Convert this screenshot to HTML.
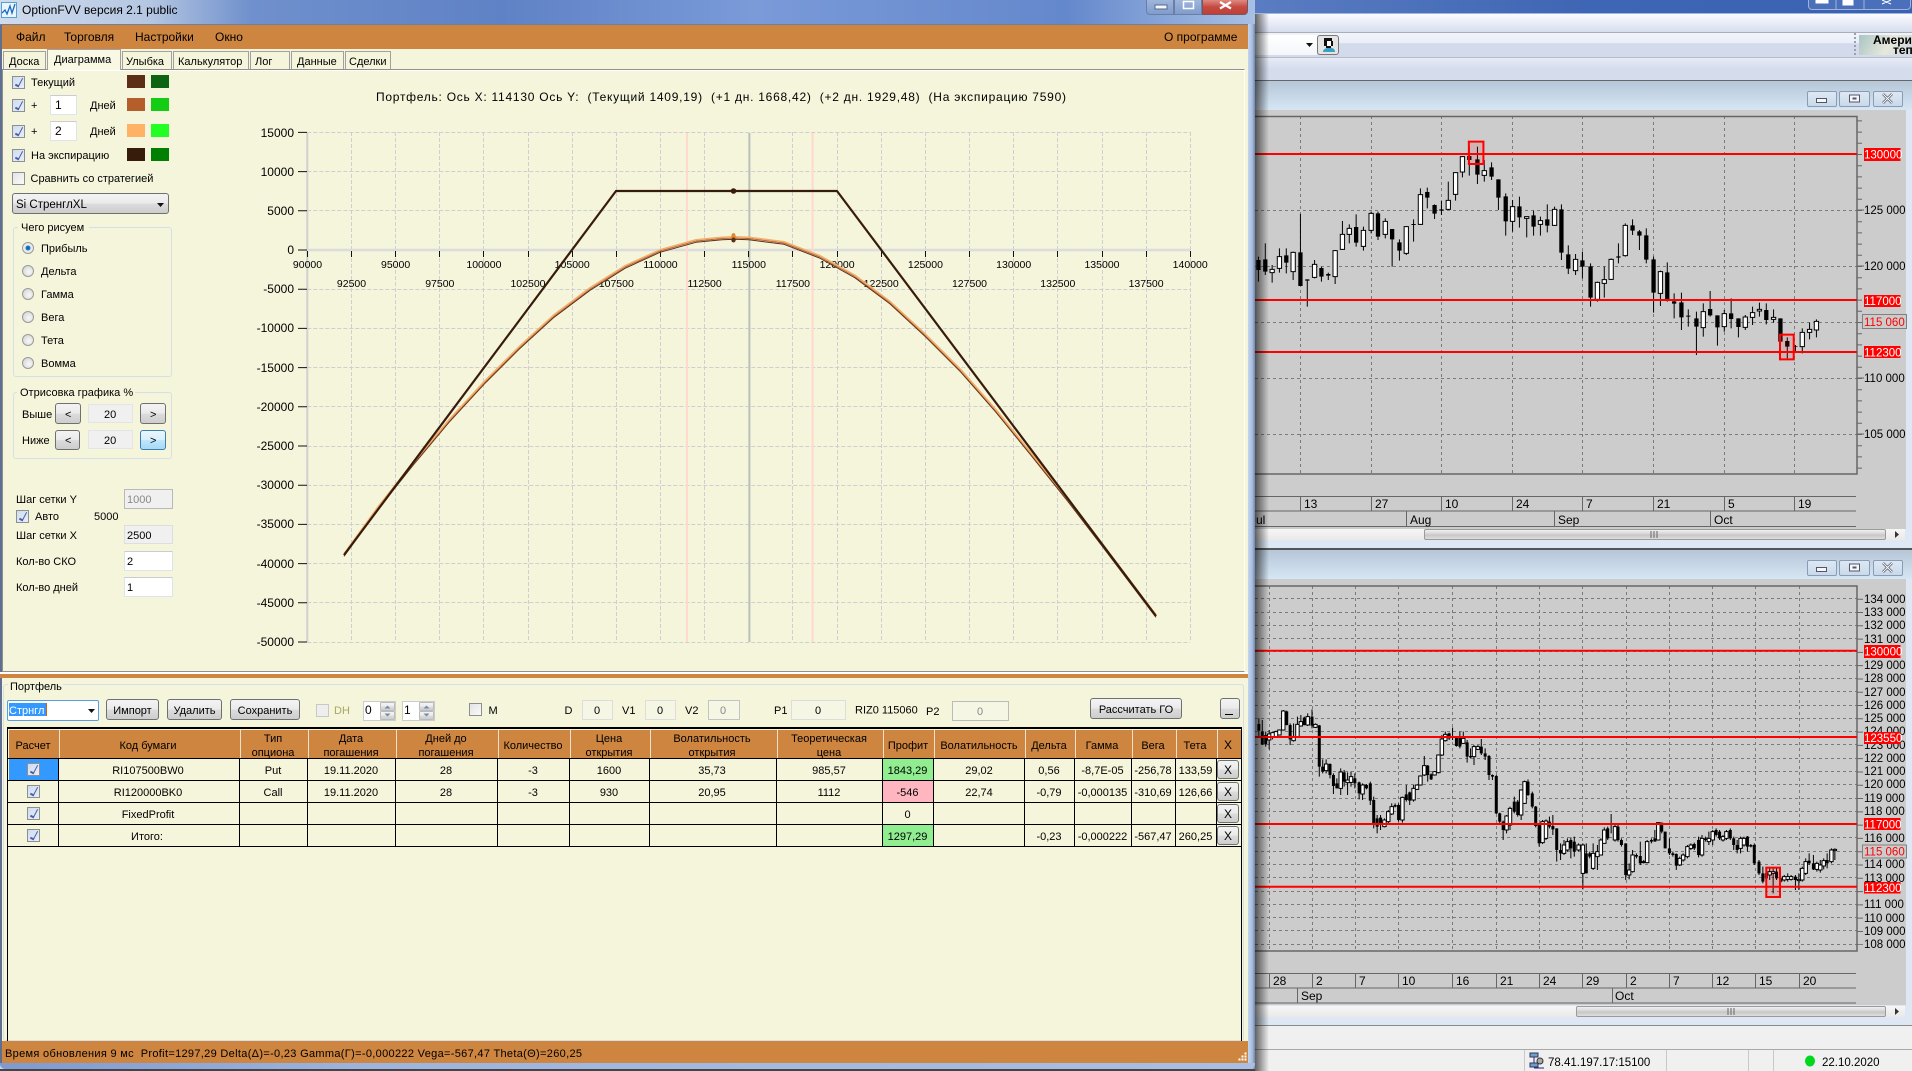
<!DOCTYPE html>
<html><head><meta charset="utf-8"><title>OptionFVV</title>
<style>
html,body{margin:0;padding:0;width:1912px;height:1071px;overflow:hidden;background:#f0f0f0}
div{position:absolute;box-sizing:border-box}
svg{position:absolute;left:0;top:0}
text{font-family:"Liberation Sans","Noto Sans CJK SC",sans-serif;font-size:11px;fill:#000;white-space:pre}
.c{width:13px;height:13px;border:1px solid #8e8f8f;background:linear-gradient(135deg,#e4e4e4,#fafafa)}
.c.on{background:linear-gradient(135deg,#cfdcf0,#e8eef8)}
.c.on:after{content:"";position:absolute;left:3.500px;top:0;width:3px;height:8px;border:solid #4a5fa8;border-width:0 1.500px 2px 0;transform:rotate(28deg)}
.r{width:12px;height:12px;border-radius:50%;left:22px;border:1px solid #9a9a9a;background:radial-gradient(circle at 60% 60%,#f8f8f8,#cfcfcf)}
.r.on{background:radial-gradient(circle,#0a5fa8 0,#1b7fc8 30%,#e8e8e8 40%,#f4f4f4)}
.b{border:1px solid #707070;border-radius:3px;background:linear-gradient(#f3f3f3,#ebebeb 48%,#dcdcdc 52%,#cdcdcd)}
.i{border:1px solid #dfe4ea;border-top-color:#c9ccd2;background:#fff}
.g{border:1px solid #b9b9b9;background:#f0f0f0}
.p{border:1px solid #d6dfe6;border-radius:3px}
.w{border:1px solid #8a9bb5;border-radius:2px;background:linear-gradient(#dde8f4,#c9d9ea)}
.s{background:linear-gradient(#f6f6f6,#e9e9e9)}
.t{border:1px solid #9a9a9a;border-radius:2px;background:linear-gradient(#f0f0f0,#d4d4d4 45%,#c6c6c6 55%,#dedede)}
.h{background:linear-gradient(#b5c6d8,#d6e6f4)}
</style></head><body>

<!-- right side background -->
<div style="left:1255px;top:0;width:657px;height:14px;background:linear-gradient(90deg,#5a7cc2,#3f66b4 50%,#3a62b0);border-bottom:1px solid #9db7e0"></div>
<div style="left:1255px;top:14px;width:657px;height:18px;background:linear-gradient(#fbfcfe,#eef1f9 35%,#d6ddee)"></div>
<div style="left:1255px;top:32px;width:657px;height:26px;border-top:1px solid #a9aeb8;border-bottom:1px solid #b8bcc4;background:linear-gradient(#f0f3fa,#ebeff8 40%,#d3daec 45%,#d3daec)"></div>
<div style="left:1255px;top:35px;width:62px;height:20px;background:linear-gradient(#fff,#f4f6fa)"></div>
<div style="left:1317px;top:35px;width:22px;height:20px;border:1px solid #777;border-radius:3px;background:#e5e5e5"></div>
<div style="left:1851px;top:33px;width:8px;height:24px;background:repeating-linear-gradient(#9aa0ae 0 2px,transparent 2px 4px) 3px 0/2px 24px no-repeat"></div>
<div style="left:1859px;top:35px;width:53px;height:20px;background:linear-gradient(120deg,#a9c4c4,#e8e8dc 55%,#c8d6dc)"></div>
<div style="left:1255px;top:58px;width:657px;height:22px;background:linear-gradient(#e6ebf6,#d5dded 50%)"></div>
<div style="left:1255px;top:80px;width:657px;height:469px;background:#dde8f4;border-top:1px solid #666"></div>
<div class="h" style="left:1255px;top:81px;width:657px;height:29px"></div>
<div style="left:1255px;top:110px;width:651px;height:419px;background:#ccc"></div>
<div class="s" style="left:1255px;top:529px;width:650px;height:11px"></div>
<div class="t" style="left:1424px;top:529px;width:462px;height:11px"></div>
<div style="left:1255px;top:548px;width:657px;height:2px;background:#555"></div>
<div class="h" style="left:1255px;top:550px;width:657px;height:29px"></div>
<div style="left:1255px;top:579px;width:657px;height:446px;background:#dde8f4"></div>
<div style="left:1255px;top:579px;width:651px;height:426px;background:#ccc"></div>
<div class="s" style="left:1255px;top:1006px;width:650px;height:11px"></div>
<div class="t" style="left:1576px;top:1006px;width:310px;height:11px"></div>
<div style="left:1255px;top:1025px;width:657px;height:1px;background:#8a8a8a"></div>
<div style="left:1255px;top:1049px;width:657px;height:1px;background:#a8a8a8"></div>
<div style="left:1524px;top:1050px;width:1px;height:21px;background:#c8c8c8"></div>
<div style="left:1666px;top:1050px;width:1px;height:21px;background:#c8c8c8"></div>
<div style="left:1748px;top:1050px;width:1px;height:21px;background:#c8c8c8"></div>
<div style="left:1773px;top:1050px;width:1px;height:21px;background:#c8c8c8"></div>
<div class="w" style="left:1807px;top:91px;width:30px;height:16px"></div>
<div class="w" style="left:1839px;top:91px;width:31px;height:16px"></div>
<div class="w" style="left:1873px;top:91px;width:30px;height:16px"></div>
<div class="w" style="left:1807px;top:560px;width:30px;height:16px"></div>
<div class="w" style="left:1839px;top:560px;width:31px;height:16px"></div>
<div class="w" style="left:1873px;top:560px;width:30px;height:16px"></div>
<div style="left:1808px;top:-2px;width:103px;height:12px;border:1px solid #9fb4d8;border-radius:0 0 4px 4px;background:#4a70bc"></div>

<!-- main window -->
<div style="left:0;top:0;width:1255px;height:1070px;background:linear-gradient(90deg,#c6d5ec,#a7bde0)"></div>
<div style="left:0;top:0;width:1255px;height:24px;background:linear-gradient(90deg,#d0dcec 0,#b4c6e2 12%,#6f90cc 20%,#5f82c6 40%,#7a9ad8 60%,#6488cc 85%,#a8c0e4 100%)"></div>
<div style="left:1248px;top:24px;width:7px;height:1046px;background:linear-gradient(90deg,#c6d5ec,#a7bde0 60%,#6f87b0)"></div>
<div style="left:0;top:24px;width:1248px;height:1px;background:#6e7f9b"></div>
<div style="left:0;top:25px;width:1248px;height:24px;background:#cd853f"></div>
<div style="left:0;top:49px;width:1248px;height:992px;background:#f5f5dc"></div>
<div style="left:0;top:25px;width:2px;height:1040px;background:#5e6f8f"></div>
<div style="left:2px;top:69px;width:1243px;height:603px;border:1px solid #8f8f8f;border-right-color:#fff;border-bottom-color:#8f8f8f;background:#f5f5dc"></div>
<div style="left:3px;top:70px;width:1241px;height:1px;background:#fff"></div>
<div style="left:0;top:672px;width:1248px;height:2px;background:#fff"></div>
<div style="left:0;top:674px;width:1248px;height:4px;background:#cd853f"></div>

<!-- tabs -->
<div style="left:3px;top:51px;width:43px;height:18px;border:1px solid #a0a0a0;border-bottom:0"></div>
<div style="left:47px;top:49px;width:74px;height:21px;border:1px solid #a0a0a0;border-bottom:0;background:#f8f8e4"></div>
<div style="left:122px;top:51px;width:50px;height:18px;border:1px solid #a0a0a0;border-bottom:0"></div>
<div style="left:173px;top:51px;width:76px;height:18px;border:1px solid #a0a0a0;border-bottom:0"></div>
<div style="left:250px;top:51px;width:40px;height:18px;border:1px solid #a0a0a0;border-bottom:0"></div>
<div style="left:291px;top:51px;width:53px;height:18px;border:1px solid #a0a0a0;border-bottom:0"></div>
<div style="left:345px;top:51px;width:46px;height:18px;border:1px solid #a0a0a0;border-bottom:0"></div>

<!-- left panel widgets -->
<div class="c on" style="left:12px;top:76px"></div>
<div class="c on" style="left:12px;top:99px"></div>
<div class="c on" style="left:12px;top:125px"></div>
<div class="c on" style="left:12px;top:149px"></div>
<div class="c" style="left:12px;top:172px"></div>
<div class="i" style="left:50px;top:95px;width:27px;height:20px"></div>
<div class="i" style="left:50px;top:121px;width:27px;height:20px"></div>
<div style="left:127px;top:75px;width:18px;height:13px;background:#5c2e16"></div><div style="left:151px;top:75px;width:18px;height:13px;background:#0d6412"></div>
<div style="left:127px;top:98px;width:18px;height:13px;background:#b35e2b"></div><div style="left:151px;top:98px;width:18px;height:13px;background:#14cc14"></div>
<div style="left:127px;top:124px;width:18px;height:13px;background:#ffb266"></div><div style="left:151px;top:124px;width:18px;height:13px;background:#22ff22"></div>
<div style="left:127px;top:148px;width:18px;height:13px;background:#381c0b"></div><div style="left:151px;top:148px;width:18px;height:13px;background:#008000"></div>
<div class="b" style="left:12px;top:193px;width:157px;height:21px"></div>
<div class="p" style="left:13px;top:227px;width:159px;height:150px"></div>
<div style="left:18px;top:221px;width:71px;height:12px;background:#f5f5dc"></div>
<div class="r on" style="top:242px"></div><div class="r" style="top:265px"></div><div class="r" style="top:288px"></div><div class="r" style="top:311px"></div><div class="r" style="top:334px"></div><div class="r" style="top:357px"></div>
<div class="p" style="left:13px;top:392px;width:159px;height:67px"></div>
<div style="left:17px;top:386px;width:118px;height:12px;background:#f5f5dc"></div>
<div class="b" style="left:55px;top:403px;width:26px;height:21px"></div>
<div class="g" style="left:88px;top:404px;width:45px;height:19px;border-color:#e4e4e4"></div>
<div class="b" style="left:140px;top:403px;width:26px;height:21px"></div>
<div class="b" style="left:55px;top:430px;width:25px;height:20px"></div>
<div class="g" style="left:88px;top:430px;width:45px;height:19px;border-color:#e4e4e4"></div>
<div class="b" style="left:140px;top:430px;width:26px;height:20px;border-color:#3c7fb1;background:linear-gradient(#eaf6fd,#d9f0fc 48%,#bee6fd 52%,#a7d9f5)"></div>
<div class="g" style="left:124px;top:489px;width:49px;height:20px"></div>
<div class="c on" style="left:16px;top:510px"></div>
<div class="g" style="left:124px;top:525px;width:49px;height:19px;border-color:#dedede"></div>
<div class="i" style="left:124px;top:551px;width:49px;height:20px"></div>
<div class="i" style="left:124px;top:577px;width:49px;height:20px"></div>

<!-- portfolio toolbar -->
<div class="p" style="left:3px;top:684px;width:1241px;height:357px"></div>
<div style="left:8px;top:679px;width:55px;height:12px;background:#f5f5dc"></div>
<div style="left:7px;top:700px;width:92px;height:21px;background:#fff;border:1px solid #569de5;border-radius:2px"></div>
<div style="left:9px;top:703px;width:37px;height:13px;background:#3399ff"></div>
<div style="left:46px;top:703px;width:1px;height:13px;background:#d06010"></div>
<div class="b" style="left:106px;top:699px;width:53px;height:21px"></div>
<div class="b" style="left:167px;top:699px;width:55px;height:21px"></div>
<div class="b" style="left:230px;top:699px;width:70px;height:21px"></div>
<div class="c" style="left:316px;top:704px;border-color:#c8c8c8;background:#eee"></div>
<div class="g" style="left:363px;top:701px;width:33px;height:20px;background:#fff;border-color:#ccc"></div>
<div class="b" style="left:380px;top:702px;width:15px;height:9px;border-radius:1px;border-color:#bbb"></div>
<div class="b" style="left:380px;top:711px;width:15px;height:9px;border-radius:1px;border-color:#bbb"></div>
<div class="g" style="left:402px;top:701px;width:33px;height:20px;background:#fff;border-color:#ccc"></div>
<div class="b" style="left:419px;top:702px;width:15px;height:9px;border-radius:1px;border-color:#bbb"></div>
<div class="b" style="left:419px;top:711px;width:15px;height:9px;border-radius:1px;border-color:#bbb"></div>
<div class="c" style="left:469px;top:703px"></div>
<div class="g" style="left:582px;top:700px;width:31px;height:20px;background:#f6f6e4;border-color:#ddd"></div>
<div class="g" style="left:645px;top:700px;width:31px;height:20px;background:#f6f6e4;border-color:#ddd"></div>
<div class="g" style="left:708px;top:700px;width:32px;height:20px;background:#f6f6e4;border-color:#c4c4c4"></div>
<div class="g" style="left:791px;top:700px;width:55px;height:20px;background:#f6f6e4;border-color:#ddd"></div>
<div class="g" style="left:952px;top:701px;width:57px;height:20px;background:#f6f6e4;border-color:#bbb"></div>
<div class="b" style="left:1090px;top:698px;width:92px;height:21px"></div>
<div class="b" style="left:1220px;top:698px;width:20px;height:21px"></div>

<!-- table -->
<div style="left:7px;top:727px;width:1235px;height:315px;border:1px solid #000;border-bottom:0;border-width:2px 1px 0 1px"></div>
<div style="left:9px;top:730px;width:1232px;height:28px;background:#cd853f"></div>
<div style="left:9px;top:759px;width:49px;height:21px;background:#3399ff"></div>
<div style="left:882px;top:759px;width:51px;height:21px;background:#90ee90"></div>
<div style="left:882px;top:781px;width:51px;height:21px;background:#ffb6c1"></div>
<div style="left:882px;top:825px;width:51px;height:21px;background:#90ee90"></div>
<div class="c on" style="left:27px;top:763px"></div>
<div class="c on" style="left:27px;top:785px"></div>
<div class="c on" style="left:27px;top:807px"></div>
<div class="c on" style="left:27px;top:829px"></div>
<div class="b" style="left:1217px;top:760px;width:22px;height:19px"></div>
<div class="b" style="left:1217px;top:782px;width:22px;height:19px"></div>
<div class="b" style="left:1217px;top:804px;width:22px;height:19px"></div>
<div class="b" style="left:1217px;top:826px;width:22px;height:19px"></div>

<!-- status -->
<div style="left:0;top:1041px;width:1248px;height:22px;background:#cd853f;border-left:2px solid #5e6f8f"></div>
<div style="left:0;top:1063px;width:1255px;height:6px;background:linear-gradient(90deg,#7e9ad0,#9db5de 30%,#a8bee2);border-radius:0 0 5px 5px"></div>
<div style="left:0;top:1069px;width:1255px;height:2px;background:#444"></div>

<!-- window controls -->
<div style="left:1146px;top:-1px;width:28px;height:16px;border:1px solid #6a7ea8;border-radius:0 0 0 4px;background:linear-gradient(#9fb6dc,#7f9ccc)"></div>
<div style="left:1174px;top:-1px;width:28px;height:16px;border:1px solid #6a7ea8;background:linear-gradient(#9fb6dc,#7f9ccc)"></div>
<div style="left:1202px;top:-1px;width:46px;height:16px;border:1px solid #7a5560;border-radius:0 0 4px 0;background:linear-gradient(#e08a80,#c44a42 50%,#c04038)"></div>

<svg width="1912" height="1071" viewBox="0 0 1912 1071">
<defs>
<linearGradient id="sh"><stop offset="0" stop-color="#000" stop-opacity=".6"/><stop offset="1" stop-color="#000" stop-opacity="0"/></linearGradient>
<clipPath id="rc"><rect x="1255" y="0" width="657" height="1071"/></clipPath>
</defs>

<g clip-path="url(#rc)">
<!-- right titlebar glyphs -->
<path d="M1816 0h12v3h-12zM1843 0h10v5h-10zM1882 0l9 4M1891 0l-9 4" fill="#fff" stroke="#fff"/>
<path d="M1836 0v10M1864 0v10" stroke="#9fb4d8"/>
<!-- toolbar icon -->
<path d="M1324 38h8v3h1v5h-2v2h-5v-2h-2z" fill="#111"/><path d="M1327 41h4v5h-4z" fill="#fff"/><path d="M1323 52c0-3 3-4 5-4h3c2 0 4 1 4 4z" fill="#3aa0c8"/>
<path d="M1306 43h7l-3.500 4z" fill="#111"/>
<text x="1873" y="44" style="font-size:12px;font-weight:bold">Амери</text>
<text x="1893" y="54" style="font-size:12px;font-weight:bold">теп</text>

<!-- chart 1 window buttons -->
<path d="M1816.500 98.500h10v4h-10zM1849.500 95h10v7h-10z" fill="#f4f8fc" stroke="#556"/><path d="M1852.500 97.500h4v2h-4z" fill="#556"/>
<path d="M1883 94l9 9M1892 94l-9 9" stroke="#556" stroke-width="2.500"/><path d="M1883 94l9 9M1892 94l-9 9" stroke="#fff"/>
<path d="M1816.500 567.500h10v4h-10zM1849.500 564h10v7h-10z" fill="#f4f8fc" stroke="#556"/><path d="M1852.500 566.500h4v2h-4z" fill="#556"/>
<path d="M1883 563l9 9M1892 563l-9 9" stroke="#556" stroke-width="2.500"/><path d="M1883 563l9 9M1892 563l-9 9" stroke="#fff"/>

<!-- chart 1 grid -->
<g fill="none" stroke="#7a7a7a" stroke-dasharray="3 3">
<path d="M1255 210.500H1857M1255 266.500H1857M1255 322.500H1857M1255 378.500H1857M1255 434.500H1857"/>
<path d="M1300.500 116V474M1371.500 116V474M1441.500 116V474M1512.500 116V474M1582.500 116V474M1653.500 116V474M1724.500 116V474M1794.500 116V474"/>
</g>
<path d="M1255 116.500H1857V474H1255" fill="none" stroke="#666" stroke-width="1.500"/>
<path d="M1859.500 120.400V471" stroke="#666" stroke-width="5" stroke-dasharray="1 10.200" fill="none"/>
<path d="M1857 210h7M1857 266h7M1857 378h7M1857 434h7" stroke="#666"/>

<g transform="translate(1240 0) scale(.42857 .33333)" fill="none">
<path vector-effect="non-scaling-stroke" stroke="#000" stroke-width="1" d="M43 770V845M59 730V825M75 795V848M92 745V818M108 745V820M124 755V840M141 642V858M157 838V920M174 780V835M190 800V845M206 818V840M222 750V852M239 663V750M255 673V730M271 643V740M288 680V752M306 635V700M322 635V720M339 655V715M355 687V800M372 718V782M388 678V765M405 658V725M421 565V675M437 563V625M454 613V657M470 603V645M486 545V630M503 517V602M519 468V532M535 440V527M554 440V552M570 480V545M587 487V540M603 538V630M620 580V707M636 600V695M652 590V683M669 650V712M685 632V707M701 650V707M717 613V697M734 620V678M750 613V780M766 736V822M783 762V825M799 755V835M818 790V920M834 845V905M850 800V893M866 775V840M883 730V790M899 670V770M916 658V705M932 690V750M948 685V790M965 770V938M981 812V918M997 787V905M1013 880V955M1030 878V990M1046 928V980M1065 935V1065M1081 910V1010M1097 873V950M1114 946V1037M1130 930V995M1146 895V985M1163 955V1012M1179 945V990M1196 920V975M1212 908V950M1228 910V973M1245 928V968M1261 955V1025M1277 1012V1075M1296 1035V1055M1312 985V1060M1329 968V1018M1345 958V1012"/>
<path stroke="#000" stroke-width="10" d="M43 780V810M59 778V815M108 766V788M141 757V858M157 838V842M190 804V830M206 822V827M271 681V728M322 640V710M355 687V718M372 727V752M405 672V675M437 576V593M454 615V641M470 628V632M535 468V480M554 478V524M587 502V530M603 538V593M620 589V664M652 619V652M685 646V680M717 658V677M750 628V758M766 763V806M799 781V800M818 799V893M883 769V773M916 676V692M932 694V707M948 706V779M965 778V878M997 817V903M1013 904V911M1030 907V952M1046 947V950M1065 955V980M1097 927V946M1114 946V982M1146 940V957M1163 955V981M1228 930V960M1261 955V1025M1277 1023V1040M1296 1038V1040"/>
<path vector-effect="non-scaling-stroke" fill="#fff" stroke="#000" stroke-width="1" d="M70 808h10v10h-10zM87 770h10v35h-10zM119 757h10v58h-10zM169 793h10v39h-10zM217 752h10v78h-10zM234 703h10v45h-10zM250 685h10v18h-10zM283 691h10v48h-10zM301 640h10v51h-10zM334 664h10v39h-10zM383 680h10v80h-10zM416 584h10v89h-10zM481 601h10v27h-10zM498 518h10v65h-10zM514 470h10v46h-10zM565 512h10v14h-10zM631 620h10v44h-10zM664 650h10v5h-10zM696 662h10v11h-10zM729 628h10v48h-10zM778 778h10v34h-10zM829 847h10v51h-10zM845 839h10v11h-10zM861 778h10v60h-10zM894 676h10v91h-10zM976 815h10v65h-10zM1076 935h10v48h-10zM1125 941h10v39h-10zM1174 951h10v31h-10zM1191 938h10v14h-10zM1207 928h10v5h-10zM1240 952h10v6h-10zM1307 997h10v43h-10zM1324 988h10v9h-10zM1340 964h10v26h-10z"/>
<path vector-effect="non-scaling-stroke" fill="#f00" fill-opacity=".12" stroke="#f00" stroke-width="2" d="M534 425h34v67h-34zM1260 1004h32v74h-32z"/>
</g>
<path d="M1255 154H1857M1255 300H1857M1255 352H1857" stroke="#f00" stroke-width="2"/>
<path d="M1864 148h36.500v13H1864zM1864 295h36.500v12H1864zM1864 346h36.500v12H1864z" fill="#f00"/>
<text x="1864" y="158.500" style="font-size:11.500px;fill:#fff">130000</text>
<text x="1864" y="305" style="font-size:11.500px;fill:#fff">117000</text>
<text x="1864" y="356.500" style="font-size:11.500px;fill:#fff">112300</text>
<text x="1864" y="214" style="font-size:11.500px">125 000</text>
<text x="1864" y="270" style="font-size:11.500px">120 000</text>
<text x="1864" y="382" style="font-size:11.500px">110 000</text>
<text x="1864" y="438" style="font-size:11.500px">105 000</text>
<rect x="1862.500" y="314.500" width="44" height="14" fill="#ccc" stroke="#808080"/>
<text x="1864" y="326" style="font-size:11.500px;fill:#f00">115 060</text>

<!-- chart 1 date axis -->
<path d="M1255 496.500H1856M1255 511H1856M1255 526.500H1856M1300.500 497V511M1371.500 497V511M1441.500 497V511M1512.500 497V511M1582.500 497V511M1653.500 497V511M1724.500 497V511M1794.500 497V511M1406.500 511V526M1554.500 511V526M1710.500 511V526" stroke="#666" fill="none"/>
<text x="1304" y="508" style="font-size:12px">13</text><text x="1375" y="508" style="font-size:12px">27</text><text x="1445" y="508" style="font-size:12px">10</text><text x="1516" y="508" style="font-size:12px">24</text><text x="1586" y="508" style="font-size:12px">7</text><text x="1657" y="508" style="font-size:12px">21</text><text x="1728" y="508" style="font-size:12px">5</text><text x="1798" y="508" style="font-size:12px">19</text>
<text x="1250" y="524" style="font-size:12px">Jul</text><text x="1410" y="524" style="font-size:12px">Aug</text><text x="1558" y="524" style="font-size:12px">Sep</text><text x="1714" y="524" style="font-size:12px">Oct</text>
<path d="M1651 531v7M1654 531v7M1657 531v7" stroke="#666"/>
<path d="M1895 531v7l4-3.500z" fill="#333"/>

<!-- chart 2 grid -->
<g fill="none" stroke="#7a7a7a" stroke-dasharray="3 3">
<path d="M1255 598.500H1857M1255 612.500H1857M1255 625.500H1857M1255 638.500H1857M1255 651.500H1857M1255 665.500H1857M1255 678.500H1857M1255 691.500H1857M1255 705.500H1857M1255 718.500H1857M1255 731.500H1857M1255 744.500H1857M1255 758.500H1857M1255 771.500H1857M1255 784.500H1857M1255 798.500H1857M1255 811.500H1857M1255 824.500H1857M1255 837.500H1857M1255 851.500H1857M1255 864.500H1857M1255 877.500H1857M1255 891.500H1857M1255 904.500H1857M1255 917.500H1857M1255 930.500H1857M1255 944.500H1857"/>
<path d="M1269.500 586V951M1312.500 586V951M1355.500 586V951M1398.500 586V951M1452.500 586V951M1496.500 586V951M1539.500 586V951M1582.500 586V951M1626.500 586V951M1669.500 586V951M1712.500 586V951M1755.500 586V951M1799.500 586V951"/>
</g>
<path d="M1255 586H1857V951H1255" fill="none" stroke="#666" stroke-width="1.500"/>
<path d="M1860 598.700V945" stroke="#666" stroke-width="6" stroke-dasharray="1 12.290" fill="none"/>

<g transform="translate(1240 540) scale(.42857 .33333)" fill="none">
<path vector-effect="non-scaling-stroke" stroke="#000" stroke-width="1" d="M44 535V590M52 540V615M60 575V620M68 570V628M76 575V598M84 572V592M92 568V586M101 510V572M109 512V556M117 550V615M125 550V605M134 530V590M142 525V560M150 530V556M158 520V558M168 508V565M176 550V564M185 555V710M193 658V700M201 658V700M210 670V715M218 700V762M226 715V745M235 685V765M243 690V740M251 697V765M259 695V740M268 700V745M278 725V778M286 730V780M295 732V748M304 725V795M312 770V865M320 825V880M328 825V870M337 835V862M346 810V850M354 790V825M362 790V802M370 790V845M379 770V848M388 735V785M396 755V795M405 735V785M413 733V750M421 706V737M430 648V708M438 675V725M446 700V720M454 693V707M463 643V700M471 585V648M479 575V605M488 578V600M496 563V600M505 590V620M513 575V625M521 575V612M530 600V668M538 625V655M546 615V675M555 615V630M563 597V645M572 625V660M581 645V720M589 703V720M598 705V822M606 818V850M614 842V900M622 825V880M630 800V870M640 770V820M648 780V830M656 748V840M664 722V792M672 718V768M682 755V805M690 798V862M698 850V920M706 840V912M714 838V900M722 830V865M730 825V885M739 865V965"/>
<path stroke="#000" stroke-width="7" d="M44 552V572M52 575V613M60 585V613M109 514V555M117 555V598M150 533V555M168 530V557M185 556V680M193 680V695M210 672V705M218 705V738M226 730V745M243 697V725M268 715V730M278 727V760M295 735V745M304 730V782M312 780V850M320 835V860M328 833V850M362 795V800M370 795V840M388 763V780M396 757V782M438 677V705M446 703V718M488 580V595M505 593V618M513 590V620M530 607V650M538 648V652M563 620V640M572 640V650M581 648V705M589 705V710M598 708V820M606 820V845M614 845V870M640 785V815M648 785V825M672 725V765M682 760V800M690 800V858M698 855V910M722 845V860M730 858V868M739 865V930"/>
<path vector-effect="non-scaling-stroke" fill="#fff" stroke="#000" stroke-width="1" d="M64 582h8v18h-8zM72 578h8v12h-8zM80 575h8v15h-8zM88 570h8v15h-8zM97 513h8v57h-8zM121 590h8v12h-8zM130 553h8v37h-8zM138 545h8v13h-8zM154 530h8v25h-8zM172 553h8v9h-8zM197 672h8v20h-8zM231 696h8v49h-8zM247 720h8v8h-8zM255 710h8v17h-8zM282 735h8v27h-8zM333 840h8v20h-8zM342 815h8v30h-8zM350 800h8v22h-8zM375 772h8v68h-8zM401 745h8v35h-8zM409 735h8v13h-8zM417 708h8v27h-8zM426 677h8v28h-8zM450 695h8v10h-8zM459 645h8v53h-8zM467 597h8v48h-8zM475 583h8v19h-8zM492 590h8v2h-8zM517 595h8v15h-8zM542 620h8v30h-8zM551 620h8v8h-8zM618 828h8v42h-8zM626 805h8v50h-8zM652 750h8v75h-8zM660 725h8v65h-8zM702 845h8v63h-8zM710 843h8v52h-8z"/>
<g transform="translate(0 870)">
<path vector-effect="non-scaling-stroke" stroke="#000" stroke-width="1" d="M748 40V90M756 30V75M764 25V65M772 22V85M780 20V80M790 40V65M800 40V178M808 40V130M816 65V85M824 40V120M834 45V120M842 25V75M850 -8V40M858 -10V30M866 -48V10M875 -15V35M882 -15V35M890 25V50M900 40V150M908 100V148M916 60V128M925 70V85M934 35V105M942 90V100M950 30V100M960 25V40M968 0V35M976 -22V32M984 -22V10M992 5V55M1002 25V75M1010 65V80M1018 70V120M1026 80V108M1034 70V95M1044 45V85M1052 40V60M1060 38V60M1070 20V82M1078 15V80M1086 20V35M1094 5V45M1103 0V45M1111 -5V20M1119 0V30M1127 15V35M1135 0V30M1144 -5V30M1152 20V60M1160 30V70M1168 20V70M1176 20V50M1184 18V65M1192 42V52M1200 40V105M1211 90V135M1220 110V160M1228 115V150M1236 115V150M1244 115V190M1252 115V150M1262 140V158M1270 135V155M1278 130V155M1286 135V152M1296 135V180M1304 130V180M1312 110V155M1320 85V135M1328 70V105M1338 75V120M1346 95V125M1354 90V128M1362 85V118M1370 70V115M1380 55V100M1388 55V90"/>
<path stroke="#000" stroke-width="7" d="M748 60V70M772 30V55M780 35V65M808 70V130M816 70V80M858 -5V25M882 -10V30M890 30V45M900 40V135M925 75V80M934 78V100M960 30V35M968 25V35M984 -22V5M992 5V55M1002 55V70M1010 70V75M1018 72V107M1060 42V55M1070 30V75M1086 25V30M1111 0V15M1119 5V25M1144 0V25M1152 25V45M1160 45V60M1184 20V50M1192 45V50M1200 45V100M1211 95V130M1220 130V155M1228 130V145M1252 125V145M1262 145V155M1296 140V150M1328 92V100M1338 100V118M1370 90V100"/>
<path vector-effect="non-scaling-stroke" fill="#fff" stroke="#000" stroke-width="1" d="M752 45h8v25h-8zM760 35h8v25h-8zM786 45h8v15h-8zM796 45h8v85h-8zM820 70h8v45h-8zM830 65h8v15h-8zM838 30h8v45h-8zM846 0h8v40h-8zM871 -10h8v40h-8zM904 120h8v15h-8zM912 75h8v50h-8zM938 95h8v3h-8zM946 35h8v63h-8zM972 -22h8v52h-8zM1022 85h8v20h-8zM1030 75h8v15h-8zM1040 50h8v30h-8zM1048 45h8v10h-8zM1074 25h8v50h-8zM1090 25h8v10h-8zM1099 5h8v25h-8zM1123 20h8v10h-8zM1131 5h8v20h-8zM1164 25h8v30h-8zM1172 25h8v20h-8zM1232 125h8v10h-8zM1240 125h8v5h-8zM1266 140h8v10h-8zM1274 140h8v8h-8zM1282 140h8v8h-8zM1300 148h8v4h-8zM1308 115h8v35h-8zM1316 95h8v35h-8zM1342 100h8v18h-8zM1350 105h8v15h-8zM1358 92h8v16h-8zM1376 60h8v35h-8zM1384 58h8v4h-8z"/>
<path vector-effect="non-scaling-stroke" fill="#f00" fill-opacity=".12" stroke="#f00" stroke-width="2" d="M1228 113h32v88h-32z"/>
</g>
</g>
<path d="M1255 650.700H1857M1255 737H1857M1255 824H1857M1255 886.700H1857" stroke="#f00" stroke-width="2"/>
<text x="1864" y="603" style="font-size:11.500px">134 000</text><text x="1864" y="616" style="font-size:11.500px">133 000</text><text x="1864" y="629" style="font-size:11.500px">132 000</text><text x="1864" y="643" style="font-size:11.500px">131 000</text><text x="1864" y="669" style="font-size:11.500px">129 000</text><text x="1864" y="682" style="font-size:11.500px">128 000</text><text x="1864" y="696" style="font-size:11.500px">127 000</text><text x="1864" y="709" style="font-size:11.500px">126 000</text><text x="1864" y="722" style="font-size:11.500px">125 000</text><text x="1864" y="735" style="font-size:11.500px">124 000</text><text x="1864" y="749" style="font-size:11.500px">123 000</text><text x="1864" y="762" style="font-size:11.500px">122 000</text><text x="1864" y="775" style="font-size:11.500px">121 000</text><text x="1864" y="788" style="font-size:11.500px">120 000</text><text x="1864" y="802" style="font-size:11.500px">119 000</text><text x="1864" y="815" style="font-size:11.500px">118 000</text><text x="1864" y="842" style="font-size:11.500px">116 000</text><text x="1864" y="868" style="font-size:11.500px">114 000</text><text x="1864" y="882" style="font-size:11.500px">113 000</text><text x="1864" y="908" style="font-size:11.500px">111 000</text><text x="1864" y="922" style="font-size:11.500px">110 000</text><text x="1864" y="935" style="font-size:11.500px">109 000</text><text x="1864" y="948" style="font-size:11.500px">108 000</text>
<path d="M1864 645h36.500v13H1864zM1864 732h36.500v12H1864zM1864 818h36.500v12H1864zM1864 882h36.500v11.500H1864z" fill="#f00"/>
<text x="1864" y="655.500" style="font-size:11.500px;fill:#fff">130000</text>
<text x="1864" y="742" style="font-size:11.500px;fill:#fff">123550</text>
<text x="1864" y="828.500" style="font-size:11.500px;fill:#fff">117000</text>
<text x="1864" y="892" style="font-size:11.500px;fill:#fff">112300</text>
<rect x="1862.500" y="845" width="44" height="13" fill="#ccc" stroke="#808080"/>
<text x="1864" y="855.500" style="font-size:11.500px;fill:#f00">115 060</text>

<!-- chart 2 date axis -->
<path d="M1255 973.500H1856M1255 988H1856M1255 1003H1856M1269.500 974V988M1312.500 974V988M1355.500 974V988M1398.500 974V988M1452.500 974V988M1496.500 974V988M1539.500 974V988M1582.500 974V988M1626.500 974V988M1669.500 974V988M1712.500 974V988M1755.500 974V988M1799.500 974V988M1297.500 988V1003M1612.500 988V1003" stroke="#666" fill="none"/>
<text x="1273" y="985" style="font-size:12px">28</text><text x="1316" y="985" style="font-size:12px">2</text><text x="1359" y="985" style="font-size:12px">7</text><text x="1402" y="985" style="font-size:12px">10</text><text x="1456" y="985" style="font-size:12px">16</text><text x="1500" y="985" style="font-size:12px">21</text><text x="1543" y="985" style="font-size:12px">24</text><text x="1586" y="985" style="font-size:12px">29</text><text x="1630" y="985" style="font-size:12px">2</text><text x="1673" y="985" style="font-size:12px">7</text><text x="1716" y="985" style="font-size:12px">12</text><text x="1759" y="985" style="font-size:12px">15</text><text x="1803" y="985" style="font-size:12px">20</text>
<text x="1301" y="1000" style="font-size:12px">Sep</text><text x="1615" y="1000" style="font-size:12px">Oct</text>
<path d="M1728 1008v7M1731 1008v7M1734 1008v7" stroke="#666"/>
<path d="M1895 1008v7l4-3.500z" fill="#333"/>

<!-- bottom status -->
<path d="M1530 1053h8v4h-8zM1530 1063h8v4h-8z" fill="#6aa0c8" stroke="#335"/><path d="M1534 1057v6M1534 1068h10" stroke="#228"/><circle cx="1540" cy="1061" r="3" fill="#aaa" stroke="#333"/>
<text x="1548" y="1066" style="font-size:11.500px">78.41.197.17:15100</text>
<ellipse cx="1810" cy="1061" rx="5" ry="5.500" fill="#00d820"/>
<text x="1822" y="1066" style="font-size:11.500px">22.10.2020</text>

<rect x="1255" y="14" width="14" height="1057" fill="url(#sh)"/>
</g>

<!-- main titlebar -->
<rect x="1.500" y="2.500" width="15" height="15" fill="#eaf6ff" stroke="#5a9fd4"/>
<path d="M2 13l3-3 2 4 3-8 2 7 3-9" fill="none" stroke="#1a6ac0" stroke-width="1.300"/>
<text x="22" y="14" style="font-size:12px">OptionFVV версия 2.1 public</text>
<path d="M1155 5h12v4h-12z" fill="#f4f8fc" stroke="#54688c"/>
<path d="M1183.500 1.500h10v7h-10z" fill="none" stroke="#fff" stroke-width="1.500"/>
<path d="M1220 2l11 6.500M1231 2l-11 6.500" stroke="#fff" stroke-width="2.200"/>

<!-- menu -->
<text x="16" y="41" style="font-size:12px">Файл</text>
<text x="64" y="41" style="font-size:12px">Торговля</text>
<text x="135" y="41" style="font-size:12px">Настройки</text>
<text x="215" y="41" style="font-size:12px">Окно</text>
<text x="1164" y="41" style="font-size:12px">О программе</text>

<!-- tabs text -->
<text x="9" y="65">Доска</text><text x="54" y="63">Диаграмма</text><text x="126" y="65">Улыбка</text><text x="178" y="65">Калькулятор</text><text x="255" y="65">Лог</text><text x="297" y="65">Данные</text><text x="349" y="65">Сделки</text>

<!-- left panel text -->
<text x="31" y="86">Текущий</text>
<text x="31" y="109">+</text><text x="55" y="109" style="font-size:12px">1</text><text x="90" y="109">Дней</text>
<text x="31" y="135">+</text><text x="55" y="135" style="font-size:12px">2</text><text x="90" y="135">Дней</text>
<text x="31" y="159">На экспирацию</text>
<text x="30.500" y="182">Сравнить со стратегией</text>
<text x="16" y="208" style="font-size:11.500px">Si СтренглXL</text>
<path d="M157 203h7l-3.500 4z" fill="#111"/>
<text x="21" y="231">Чего рисуем</text>
<text x="41" y="252">Прибыль</text><text x="41" y="275">Дельта</text><text x="41" y="298">Гамма</text><text x="41" y="321">Вега</text><text x="41" y="344">Тета</text><text x="41" y="367">Вомма</text>
<text x="20" y="396">Отрисовка графика %</text>
<text x="22" y="418">Выше</text><text x="22" y="444">Ниже</text>
<text x="65" y="418">&lt;</text><text x="150" y="418">&gt;</text><text x="65" y="444">&lt;</text><text x="150" y="444">&gt;</text>
<text x="104" y="418">20</text><text x="104" y="444">20</text>
<text x="16" y="503">Шаг сетки Y</text><text x="127" y="503" style="fill:#888">1000</text>
<text x="35" y="520">Авто</text><text x="94" y="520">5000</text>
<text x="16" y="539">Шаг сетки X</text><text x="127" y="539">2500</text>
<text x="16" y="565">Кол-во СКО</text><text x="127" y="565">2</text>
<text x="16" y="591">Кол-во дней</text><text x="127" y="591">1</text>

<!-- main chart -->
<text x="376" y="101" textLength="690" lengthAdjust="spacing" style="font-size:12px">Портфель: Ось X: 114130 Ось Y:  (Текущий 1409,19)  (+1 дн. 1668,42)  (+2 дн. 1929,48)  (На экспирацию 7590)</text>
<g fill="none" stroke="#cfcfd2" stroke-dasharray="4 2">
<path d="M307.300 132.500H1190M307.300 171.500H1190M307.300 210.500H1190M307.300 289.500H1190M307.300 328.500H1190M307.300 367.500H1190M307.300 406.500H1190M307.300 446.500H1190M307.300 485.500H1190M307.300 524.500H1190M307.300 563.500H1190M307.300 602.500H1190M307.300 642.500H1190"/>
<path d="M351.500 132V642M395.500 132V642M439.500 132V642M483.500 132V642M528.500 132V642M572.500 132V642M616.500 132V642M660.500 132V642M704.500 132V642M792.500 132V642M837.500 132V642M881.500 132V642M925.500 132V642M969.500 132V642M1013.500 132V642M1057.500 132V642M1102.500 132V642M1146.500 132V642M1190.500 132V642"/>
</g>
<path d="M307.300 132V642" stroke="#d0d0d0" stroke-width="2"/>
<path d="M307 250H1190" stroke="#dcdcdc" stroke-width="2.500"/>
<path d="M687 133V642M812.600 133V642" stroke="#ffd8cf" stroke-width="2"/>
<path d="M749.400 133V642" stroke="#b8c0b8" stroke-width="2"/>
<path d="M298 132.400h9M298 171.600h9M298 210.800h9M298 250h9M298 289.200h9M298 328.400h9M298 367.600h9M298 406.800h9M298 446h9M298 485.200h9M298 524.400h9M298 563.600h9M298 602.800h9M298 642h9" stroke="#111"/>
<path d="M307.500 251v6M351.500 251v6M395.500 251v6M439.500 251v6M483.500 251v6M528.500 251v6M572.500 251v6M616.500 251v6M660.500 251v6M704.500 251v6M748.500 251v6M792.500 251v6M837.500 251v6M881.500 251v6M925.500 251v6M969.500 251v6M1013.500 251v6M1057.500 251v6M1102.500 251v6M1146.500 251v6M1190.500 251v6" stroke="#111"/>
<g text-anchor="end">
<text x="294" y="137" style="font-size:12px">15000</text><text x="294" y="176" style="font-size:12px">10000</text><text x="294" y="215" style="font-size:12px">5000</text><text x="294" y="254" style="font-size:12px">0</text><text x="294" y="293" style="font-size:12px">-5000</text><text x="294" y="332" style="font-size:12px">-10000</text><text x="294" y="372" style="font-size:12px">-15000</text><text x="294" y="411" style="font-size:12px">-20000</text><text x="294" y="450" style="font-size:12px">-25000</text><text x="294" y="489" style="font-size:12px">-30000</text><text x="294" y="528" style="font-size:12px">-35000</text><text x="294" y="568" style="font-size:12px">-40000</text><text x="294" y="607" style="font-size:12px">-45000</text><text x="294" y="646" style="font-size:12px">-50000</text>
</g>
<g text-anchor="middle">
<text x="307.500" y="268" style="font-size:10.500px">90000</text><text x="395.600" y="268" style="font-size:10.500px">95000</text><text x="483.900" y="268" style="font-size:10.500px">100000</text><text x="572.200" y="268" style="font-size:10.500px">105000</text><text x="660.500" y="268" style="font-size:10.500px">110000</text><text x="748.800" y="268" style="font-size:10.500px">115000</text><text x="837.100" y="268" style="font-size:10.500px">120000</text><text x="925.400" y="268" style="font-size:10.500px">125000</text><text x="1013.700" y="268" style="font-size:10.500px">130000</text><text x="1102" y="268" style="font-size:10.500px">135000</text><text x="1190.200" y="268" style="font-size:10.500px">140000</text>
<text x="351.500" y="287" style="font-size:10.500px">92500</text><text x="439.800" y="287" style="font-size:10.500px">97500</text><text x="528" y="287" style="font-size:10.500px">102500</text><text x="616.300" y="287" style="font-size:10.500px">107500</text><text x="704.600" y="287" style="font-size:10.500px">112500</text><text x="792.900" y="287" style="font-size:10.500px">117500</text><text x="881.200" y="287" style="font-size:10.500px">122500</text><text x="969.500" y="287" style="font-size:10.500px">127500</text><text x="1057.800" y="287" style="font-size:10.500px">132500</text><text x="1146.100" y="287" style="font-size:10.500px">137500</text>
</g>
<g fill="none" stroke-linejoin="round">
<path stroke="#5c2e16" stroke-width="1" transform="translate(0 1.300)" d="M344 555L360 533 378 508 413 464 449 421 484 383 519 348 554 316 590 289 625 267 660 251 696 241 722 238.500 735 238 749 238.500 784 243 819.500 256.700 855 276.500 890 302.600 925 335 961 371 996 411 1031 454 1067 499 1102 544.600 1151 609.500 1156 616"/>
<path stroke="#b35e2b" stroke-width="1" d="M344 555L360 533 378 508 413 464 449 421 484 383 519 348 554 316 590 289 625 267 660 251 696 241 722 238.500 735 238 749 238.500 784 243 819.500 256.700 855 276.500 890 302.600 925 335 961 371 996 411 1031 454 1067 499 1102 544.600 1151 609.500 1156 616"/>
<path stroke="#f2ae6c" stroke-width="1.600" transform="translate(0 -1.200)" d="M344 555L360 533 378 508 413 464 449 421 484 383 519 348 554 316 590 289 625 267 660 251 696 241 722 238.500 735 238 749 238.500 784 243 819.500 256.700 855 276.500 890 302.600 925 335 961 371 996 411 1031 454 1067 499 1102 544.600 1151 609.500 1156 616"/>
<path stroke="#381c0b" stroke-width="2.200" d="M344 555L616 191H837L1156 616"/>
</g>
<circle cx="733.500" cy="191" r="2.800" fill="#381c0b"/>
<ellipse cx="733.500" cy="236.500" rx="2.200" ry="3.500" fill="#e08a30"/>
<ellipse cx="733.500" cy="240" rx="2.200" ry="2.500" fill="#5c2e16"/>

<!-- portfolio text -->
<text x="10" y="690">Портфель</text>
<text x="9" y="714" style="fill:#fff">Стрнгл</text>
<path d="M88 709h7l-3.500 4z" fill="#111"/>
<text x="132.500" y="714" text-anchor="middle">Импорт</text><text x="194.500" y="714" text-anchor="middle">Удалить</text><text x="265" y="714" text-anchor="middle">Сохранить</text>
<text x="334" y="714" style="fill:#a8a860">DH</text>
<text x="365" y="714" style="font-size:12px">0</text><text x="404" y="714" style="font-size:12px">1</text>
<path d="M384.500 708.500l3-3 3 3zM384.500 713.500l3 3 3-3zM423.500 708.500l3-3 3 3zM423.500 713.500l3 3 3-3z" fill="#6f8cb0"/>
<text x="488.500" y="714">M</text>
<text x="564.500" y="714">D</text><text x="594" y="714">0</text>
<text x="622" y="714">V1</text><text x="657" y="714">0</text>
<text x="685" y="714">V2</text><text x="720" y="714" style="fill:#888">0</text>
<text x="774" y="714">P1</text><text x="815" y="714">0</text>
<text x="855" y="713.500">RIZ0 115060</text>
<text x="926" y="715">P2</text><text x="977" y="715" style="fill:#888">0</text>
<text x="1136" y="713" text-anchor="middle">Рассчитать ГО</text>
<path d="M1225 714.500h8" stroke="#000"/>

<!-- table lines -->
<path d="M7.500 758.500H1241.500M7.500 780.500H1241.500M7.500 802.500H1241.500M7.500 824.500H1241.500M7.500 846.500H1241.500" stroke="#000" fill="none"/>
<path d="M58.500 758V846M239.500 758V846M307.500 758V846M395.500 758V846M497.500 758V846M569.500 758V846M649.500 758V846M776.500 758V846M882.500 758V846M933.500 758V846M1024.500 758V846M1074.500 758V846M1131.500 758V846M1175.500 758V846M1216.500 758V846" stroke="#000" fill="none"/>
<path d="M59.500 730V758M240.500 730V758M308.500 730V758M396.500 730V758M498.500 730V758M570.500 730V758M650.500 730V758M777.500 730V758M883.500 730V758M934.500 730V758M1025.500 730V758M1075.500 730V758M1132.500 730V758M1176.500 730V758M1217.500 730V758" stroke="#f0e0cc" fill="none"/>

<g text-anchor="middle">
<text x="33" y="749">Расчет</text><text x="148" y="749">Код бумаги</text>
<text x="273" y="742">Тип</text><text x="273" y="756">опциона</text>
<text x="351" y="742">Дата</text><text x="351" y="756">погашения</text>
<text x="446" y="742">Дней до</text><text x="446" y="756">погашения</text>
<text x="533" y="749">Количество</text>
<text x="609" y="742">Цена</text><text x="609" y="756">открытия</text>
<text x="712" y="742">Волатильность</text><text x="712" y="756">открытия</text>
<text x="829" y="742">Теоретическая</text><text x="829" y="756">цена</text>
<text x="908" y="749">Профит</text><text x="979" y="749">Волатильность</text><text x="1049" y="749">Дельта</text><text x="1102" y="749">Гамма</text><text x="1153" y="749">Вега</text><text x="1195" y="749">Тета</text><text x="1228" y="749" style="font-size:12px">X</text>

<text x="148" y="774">RI107500BW0</text><text x="273" y="774">Put</text><text x="351" y="774">19.11.2020</text><text x="446" y="774">28</text><text x="533" y="774">-3</text><text x="609" y="774">1600</text><text x="712" y="774">35,73</text><text x="829" y="774">985,57</text><text x="907.500" y="774">1843,29</text><text x="979" y="774">29,02</text><text x="1049" y="774">0,56</text><text x="1102.500" y="774">-8,7E-05</text><text x="1153" y="774">-256,78</text><text x="1195.500" y="774">133,59</text><text x="1228" y="774" style="font-size:12px">X</text>

<text x="148" y="796">RI120000BK0</text><text x="273" y="796">Call</text><text x="351" y="796">19.11.2020</text><text x="446" y="796">28</text><text x="533" y="796">-3</text><text x="609" y="796">930</text><text x="712" y="796">20,95</text><text x="829" y="796">1112</text><text x="907.500" y="796">-546</text><text x="979" y="796">22,74</text><text x="1049" y="796">-0,79</text><text x="1102.500" y="796">-0,000135</text><text x="1153" y="796">-310,69</text><text x="1195.500" y="796">126,66</text><text x="1228" y="796" style="font-size:12px">X</text>

<text x="148" y="818">FixedProfit</text><text x="907.500" y="818">0</text><text x="1228" y="818" style="font-size:12px">X</text>

<text x="147" y="840">Итого:</text><text x="907.500" y="840">1297,29</text><text x="1049" y="840">-0,23</text><text x="1102.500" y="840">-0,000222</text><text x="1153" y="840">-567,47</text><text x="1195.500" y="840">260,25</text><text x="1228" y="840" style="font-size:12px">X</text>
</g>

<text x="5" y="1057" textLength="577" lengthAdjust="spacing">Время обновления 9 мс  Profit=1297,29 Delta(Δ)=-0,23 Gamma(Γ)=-0,000222 Vega=-567,47 Theta(Θ)=260,25</text>
<path d="M1245 1053h1v1h-1zM1242 1056h1v1h-1zM1245 1056h1v1h-1zM1239 1059h1v1h-1zM1242 1059h1v1h-1zM1245 1059h1v1h-1z" fill="#fff" stroke="#fff"/>
</svg>
</body></html>
